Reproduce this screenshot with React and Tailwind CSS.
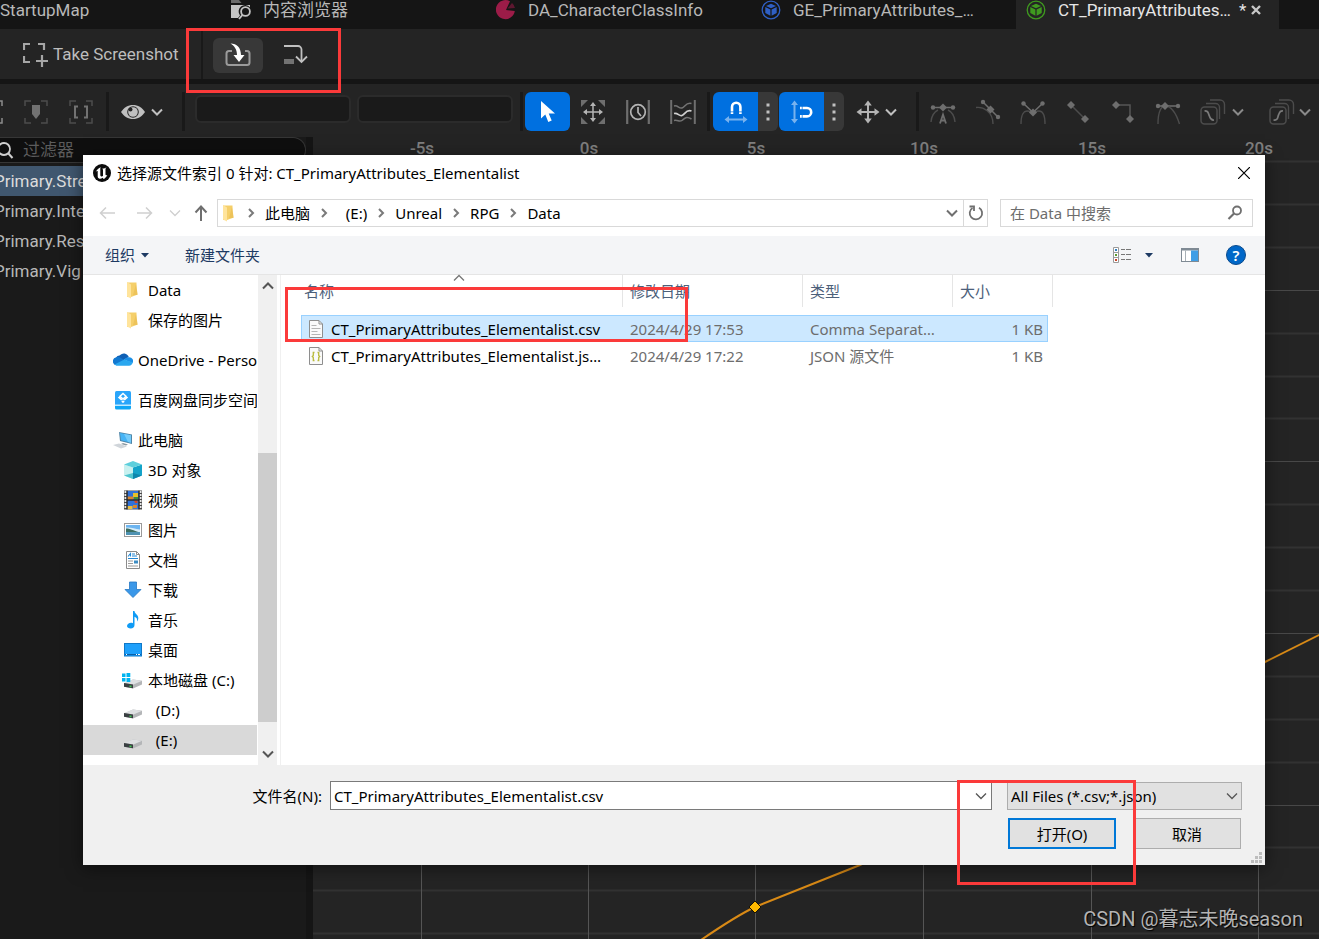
import React, { useState } from 'react';
import clsx from 'clsx';

const TABS = [
  { id: 'browser', label: '内容浏览器', icon: BrowserIcon },
  { id: 'da', label: 'DA_CharacterClassInfo', icon: PieIcon },
  { id: 'ge', label: 'GE_PrimaryAttributes_…', icon: CubeIcon, color: 'text-[#2f5fc4]' },
  { id: 'ct', label: 'CT_PrimaryAttributes…', icon: CubeIcon, color: 'text-[#3f9a1f]', active: true },
];

const CURVES = ['Primary.Stre', 'Primary.Inte', 'Primary.Res', 'Primary.Vig'];

const CRUMBS = ['此电脑', '\u00a0\u00a0(E:)', 'Unreal', 'RPG', 'Data'];

const PLACES = [
  { label: 'Data', icon: FolderIcon, child: true },
  { label: '保存的图片', icon: FolderIcon, child: true },
  { label: 'OneDrive - Personal', icon: CloudIcon, spaced: true },
  { label: '百度网盘同步空间', icon: NetdiskIcon, spaced: true },
  { label: '此电脑', icon: PcIcon, spaced: true },
  { label: '3D 对象', icon: Box3dIcon, child: true },
  { label: '视频', icon: VideoIcon, child: true },
  { label: '图片', icon: PictureIcon, child: true },
  { label: '文档', icon: DocIcon, child: true },
  { label: '下载', icon: DownloadIcon, child: true },
  { label: '音乐', icon: MusicIcon, child: true },
  { label: '桌面', icon: DesktopIcon, child: true },
  { label: '本地磁盘 (C:)', icon: SystemDriveIcon, child: true },
  { label: '\u00a0\u00a0(D:)', icon: DriveIcon, child: true },
  { label: '\u00a0\u00a0(E:)', icon: DriveIcon, child: true, selected: true },
];

const FILES = [
  { name: 'CT_PrimaryAttributes_Elementalist.csv', date: '2024/4/29 17:53', type: 'Comma Separat…', size: '1 KB', icon: TextFileIcon },
  { name: 'CT_PrimaryAttributes_Elementalist.js…', date: '2024/4/29 17:22', type: 'JSON 源文件', size: '1 KB', icon: JsonFileIcon },
];

/* ---------- editor icons ---------- */

function Svg({ w = 24, h = 24, className, children }) {
  return (
    <svg width={w} height={h} viewBox={`0 0 ${w} ${h}`} fill="none" className={clsx('shrink-0', className)} aria-hidden="true">
      {children}
    </svg>
  );
}

function BrowserIcon() {
  return (
    <Svg w={20} h={20}>
      <path d="M0 0h8l2.500 3H0z" fill="#6b6b6b" />
      <path d="M0 5h19v2.200a6.500 6.500 0 0 0-10 8.300L7 18H0z" fill="#c4c4c4" />
      <circle cx="14.500" cy="11.500" r="4.400" stroke="#c4c4c4" strokeWidth="1.800" />
      <path d="M11.500 14.800 8 19" stroke="#c4c4c4" strokeWidth="1.800" />
    </Svg>
  );
}

function PieIcon() {
  return (
    <Svg w={20} h={20}>
      <path d="M10 10 14 1.300A9.500 9.500 0 1 0 18.800 11z" fill="#9c1c48" />
      <path d="M11.500 8.500 16 3a9 9 0 0 1 3 5z" fill="#5e1730" />
    </Svg>
  );
}

function CubeIcon() {
  return (
    <Svg w={20} h={20}>
      <circle cx="10" cy="10" r="8.800" stroke="currentColor" strokeWidth="1.300" />
      <path d="M10 3.700 15 6l-5 2.300L5 6z" fill="currentColor" />
      <path d="M4.300 7 9.400 9.400v6.400l-5.100-2.700zM15.700 7l-5.100 2.400v6.400l5.100-2.700z" fill="currentColor" />
    </Svg>
  );
}

function ScreenshotIcon() {
  return (
    <Svg w={26} h={26}>
      <path d="M1 8V2h6M15 2h6v6M1 14v6h6" stroke="#a6a6a6" strokeWidth="2.200" />
      <path d="M19 13v12M13 19h12" stroke="#a6a6a6" strokeWidth="2.200" />
    </Svg>
  );
}

function ReimportIcon() {
  return (
    <Svg w={26} h={24}>
      <path d="M7 8H4a2.500 2.500 0 0 0-2.500 2.500v9A2.500 2.500 0 0 0 4 22h18a2.500 2.500 0 0 0 2.500-2.500v-9A2.500 2.500 0 0 0 22 8h-2" stroke="#9b9b9b" strokeWidth="2" />
      <path d="M5.500.500C12 .500 15.800 4.500 16 12h3.500L14 19 8.500 12H12C12 6.500 9.500 3 5.500.500z" fill="#fff" />
    </Svg>
  );
}

function AppendIcon() {
  return (
    <Svg w={24} h={22}>
      <path d="M0 2h14a3.500 3.500 0 0 1 3.500 3.500V17" stroke="#c0c0c0" strokeWidth="1.800" />
      <path d="M12 12.500l5.500 5.500 5.500-5.500" stroke="#c0c0c0" strokeWidth="1.800" />
      <rect y="15" width="10" height="5" fill="#737373" />
    </Svg>
  );
}

function Corners({ color = '#4c4c4c' }) {
  return <path d="M1 6V1h6M17 1h6v5M1 18v5h6M17 23h6v-5" stroke={color} strokeWidth="1.500" />;
}

function FrameIcon({ kind }) {
  return (
    <Svg>
      <Corners color={kind === 'all' ? '#8c8c8c' : '#4c4c4c'} />
      {kind === 'marker' && <path d="M8 5h8v9l-4 5-4-5z" fill="#727272" />}
      {kind === 'range' && <path d="M9 6.500H6v11h3M15 6.500h3v11h-3" stroke="#727272" strokeWidth="2" />}
    </Svg>
  );
}

function EyeIcon() {
  return (
    <Svg w={24} h={16}>
      <path d="M0 8C3 3.500 7 1 12 1s9 2.500 12 7c-3 4.500-7 7-12 7S3 12.500 0 8z" fill="#c0c0c0" />
      <circle cx="12" cy="8" r="5.800" fill="#242424" />
      <circle cx="12" cy="8" r="4.800" fill="#c0c0c0" />
      <circle cx="9.500" cy="5.500" r="2" fill="#242424" />
    </Svg>
  );
}

function Chevron({ className = 'text-[#c0c0c0]' }) {
  return (
    <Svg w={12} h={8} className={className}>
      <path d="M1 1.500l5 5 5-5" stroke="currentColor" strokeWidth="2" />
    </Svg>
  );
}

function CursorIcon() {
  return (
    <Svg w={16} h={22}>
      <path d="M1 0v17.500l4.300-4 3 7.500 3.400-1.400-3-7.200H15z" fill="#fff" />
    </Svg>
  );
}

function MoveGlyph() {
  return (
    <g fill="currentColor" stroke="currentColor">
      <path d="M12 4v16M4 12h16" strokeWidth="2" />
      <path d="M12 .500l3.800 5H8.200zM12 23.500l3.800-5H8.200zM.500 12l5-3.800v7.600zM23.500 12l-5-3.800v7.600z" stroke="none" />
    </g>
  );
}

function TransformIcon() {
  return (
    <Svg className="text-[#b4b4b4]">
      <path d="M0 0h7L0 7zM24 0h-7l7 7zM0 24h7l-7-7zM24 24h-7l7-7z" fill="#6e6e6e" />
      <path d="M12 5v14M5 12h14" stroke="currentColor" strokeWidth="1.500" />
      <path d="M12 2l3 4H9zM12 22l3-4H9zM2 12l4-3v6zM22 12l-4-3v6z" fill="currentColor" />
    </Svg>
  );
}

function RetimeIcon() {
  return (
    <Svg>
      <path d="M1.200 0v24M22.800 0v24" stroke="#6e6e6e" strokeWidth="2.200" />
      <circle cx="12" cy="12" r="7.300" stroke="#b4b4b4" strokeWidth="1.700" />
      <path d="M12 7v5.500l3 3.500" stroke="#b4b4b4" strokeWidth="1.700" />
    </Svg>
  );
}

function WavesIcon() {
  return (
    <Svg w={26}>
      <path d="M1.200 0v24M24.800 0v24" stroke="#6e6e6e" strokeWidth="2" />
      <path d="M4 6c4-1 5 3 8 2s4-6 9.500-4.500M4 20.500c4-1 5 2 8 0s4-5 9.500-1.500" stroke="#747474" strokeWidth="1.500" />
      <path d="M4 13.500c4-1 5 3 8 2s4-6.500 9.500-4.500" stroke="#d0d0d0" strokeWidth="1.700" />
    </Svg>
  );
}

function MagnetIcon({ sideways }) {
  return (
    <Svg w={24} h={24}>
      <g transform={sideways ? 'rotate(90 12 12)' : undefined}>
        <path d="M8 11.500V7a4.200 4.200 0 0 1 8.400 0v4.500" stroke="#fff" strokeWidth="2.600" />
        <path d="M6.700 12.200h2.600v1.800H6.700zM15.100 12.200h2.600v1.800h-2.600z" fill="#fff" />
        <path d="M4 19.500h16" stroke="#78b2ee" strokeWidth="2" />
        <path d="M.500 19.500 5 16v7zM23.500 19.500 19 16v7z" fill="#78b2ee" />
      </g>
    </Svg>
  );
}

function Dots() {
  return (
    <Svg w={4} h={18}>
      <path d="M.500.500h3v3h-3zM.500 7.500h3v3h-3zM.500 14.500h3v3h-3z" fill="#c0c0c0" />
    </Svg>
  );
}

function Key({ x, y }) {
  return <path d={`M${x} ${y - 4}l4 4-4 4-4-4z`} fill="#6e6e6e" />;
}

function TangentIcon({ kind }) {
  return (
    <Svg w={26} h={26}>
      {kind === 'auto' && (
        <>
          <path d="M3 8.500h20" stroke="#6e6e6e" strokeWidth="1.500" />
          <circle cx="3" cy="8.500" r="2.200" fill="#6e6e6e" />
          <circle cx="23" cy="8.500" r="2.200" fill="#6e6e6e" />
          <path d="M1 23c.500-6 3-10 7-12M25 23c-.500-6-3-10-7-12" stroke="#4c4c4c" strokeWidth="1.400" />
          <Key x={13} y={8.5} />
          <path d="M10 24.500 13 15.500l3 9M11 21.500h4" stroke="#6e6e6e" strokeWidth="1.800" />
        </>
      )}
      {kind === 'user' && (
        <>
          <path d="M8 3l15 15" stroke="#6e6e6e" strokeWidth="1.500" />
          <circle cx="8" cy="3" r="2.200" fill="#6e6e6e" />
          <circle cx="23" cy="18" r="2.200" fill="#6e6e6e" />
          <path d="M1 8.500c7-1 17 4 17 16.500" stroke="#4c4c4c" strokeWidth="1.400" />
          <Key x={15.5} y={10.5} />
        </>
      )}
      {kind === 'break' && (
        <>
          <path d="M3.500 4.500l9.500 9 9.500-9" stroke="#6e6e6e" strokeWidth="1.500" />
          <circle cx="3.500" cy="4.500" r="2.200" fill="#6e6e6e" />
          <circle cx="22.500" cy="4.500" r="2.200" fill="#6e6e6e" />
          <path d="M1 25c0-10 3-13 6-13s4 2 6 2 3-2 6-2 6 3 6 13" stroke="#4c4c4c" strokeWidth="1.400" />
          <Key x={13} y={13.5} />
        </>
      )}
      {kind === 'linear' && (
        <>
          <path d="M6 6l14 14" stroke="#4c4c4c" strokeWidth="1.500" />
          <Key x={6} y={6} />
          <Key x={20} y={20} />
        </>
      )}
      {kind === 'constant' && (
        <>
          <path d="M6 6h14v14" stroke="#555" strokeWidth="1.500" />
          <Key x={6} y={6} />
          <Key x={20} y={20} />
        </>
      )}
      {kind === 'weighted' && (
        <>
          <path d="M3 7h20" stroke="#6e6e6e" strokeWidth="1.500" />
          <circle cx="3" cy="7" r="2.200" fill="#6e6e6e" />
          <circle cx="23" cy="7" r="2.200" fill="#6e6e6e" />
          <path d="M3 25C3 11 7 7 10 7c6 0 11 7 14.500 18" stroke="#4c4c4c" strokeWidth="1.400" />
          <Key x={10} y={7} />
        </>
      )}
    </Svg>
  );
}

function InfinityIcon({ mirrored }) {
  return (
    <Svg w={26} h={26}>
      <path d="M6 4.500h9.500a4 4 0 0 1 4 4V20M10 1h10a4.500 4.500 0 0 1 4.500 4.500V15" stroke="#4c4c4c" strokeWidth="1.400" />
      <rect x="1" y="8" width="16" height="17" rx="3.500" stroke="#4c4c4c" strokeWidth="1.500" />
      <path
        d={mirrored ? 'M4.500 21c5 .500 4-3 5-5s1-4.500 4.500-4' : 'M4.500 12c4-.500 3.500 2 4.500 4s1 5.500 5 5'}
        stroke="#7a7a7a"
        strokeWidth="1.700"
      />
    </Svg>
  );
}

/* ---------- dialog icons ---------- */

function UnrealIcon() {
  return (
    <Svg w={18} h={18}>
      <circle cx="9" cy="9" r="9" fill="#0b0b0b" />
      <path
        d="M2.500 8.500C3.500 6 5.500 4 8 3.300c-.700.600-.700 1.200-.700 2v5.800c0 1 .700 1.500 1.500 1.300.500-.100.900-.400 1.200-.700V6c0-.700-.300-1-.900-1.200 1.800-.200 3.500-.900 4.600-1.800-.900.900-1.200 1.500-1.200 2.500v5c0 .800.600 1 1.800.400-1 2.300-2.300 3.300-3.600 4l-1.200-1.200C8.500 14.700 7.500 15 6.500 14.700c-1.400-.400-1.800-1.300-1.800-2.400V7.500c0-.700-1-.700-2.200 1z"
        fill="#fff"
      />
    </Svg>
  );
}

function ArrowIcon({ dir, className }) {
  return (
    <Svg w={16} h={16} className={className}>
      {dir === 'left' && <path d="M16 8H1.500M7 2.500 1.500 8 7 13.500" stroke="currentColor" strokeWidth="1.500" />}
      {dir === 'right' && <path d="M0 8h14.500M9 2.500 14.500 8 9 13.500" stroke="currentColor" strokeWidth="1.500" />}
      {dir === 'up' && <path d="M8 16V1.500M2.500 7.500 8 1.500l5.500 6" stroke="currentColor" strokeWidth="2" />}
    </Svg>
  );
}

function ThinChevron({ dir = 'down', bold, className }) {
  const paths = { down: 'M1 2.500l5 5 5-5', up: 'M1 7.500l5-5 5 5', right: 'M4 1l4 4-4 4' };
  return (
    <Svg w={12} h={10} className={className}>
      <path d={paths[dir]} stroke="currentColor" strokeWidth={bold ? 2 : 1.3} />
    </Svg>
  );
}

function FolderIcon() {
  return (
    <Svg w={18} h={18}>
      <path d="M3 1.500h9.500V14L7 16H3z" fill="#f5cf6a" />
      <path d="M12 3l1.500 9.500V14H9z" fill="#edc35a" />
      <path d="M3 1l4 2.500V17.500L3 15.500z" fill="#ffe49c" />
    </Svg>
  );
}

function CloudIcon() {
  return (
    <Svg w={20} h={18}>
      <path d="M6.500 4.500A5.500 5.500 0 0 1 15.800 6L9 10 3 6.500A5 5 0 0 1 6.500 4.500z" fill="#0f5fb4" />
      <path d="M3.200 6.200A4 4 0 0 1 7 6.500l7 4-10.500 3.800A4.100 4.100 0 0 1 3.200 6.200z" fill="#1278d0" />
      <path d="M15.800 6.200A3.800 3.800 0 0 1 19.500 12L11 8.800C12 7 14 6 15.800 6.200z" fill="#1b8fe6" />
      <path d="M1.500 13.500 11.300 8.500 19.800 11.500c-.500 2-1.800 3.200-3.800 3.200H5c-1.400 0-2.600-.300-3.500-1.200z" fill="#2aa7ef" />
    </Svg>
  );
}

function NetdiskIcon() {
  return (
    <Svg w={20} h={20}>
      <path d="M2 2.500A1.500 1.500 0 0 1 3.500 1H16.500A1.500 1.500 0 0 1 18 2.500V15H2z" fill="#2aa5fa" />
      <path d="M2 15.500H18v2.500a1.500 1.500 0 0 1-1.500 1.500h-13A1.500 1.500 0 0 1 2 18z" fill="#10a6f5" />
      <path d="M2 14.500H18V16H2z" fill="#bfe9ff" />
      <path d="M10 3.500l3 2.800L10 9 7 6.300z" stroke="#fff" strokeWidth="1.500" />
      <path d="M4.800 7.500l1.700-1.300 3.200 3-1.500 1.300zM15.200 7.500l-1.700-1.300-3.200 3 1.500 1.300zM10 10.300l1.800 1.400L10 13.100l-1.800-1.400z" fill="#fff" />
    </Svg>
  );
}

function PcIcon() {
  return (
    <Svg w={20} h={18}>
      <path d="M6 1l13 2.500v9.500L7 10z" fill="#4f86a8" />
      <path d="M7 2l11 2.300v7.400L8 9.200z" fill="#45b3f5" />
      <path d="M11 2.900l7 1.400v7.400l-3-.700z" fill="#74cbfa" />
      <path d="M10 12l5 1.500-2 1-5-1.500z" fill="#8c9aa3" />
      <path d="M0 14l6-1.500 8 3L8 17.500z" fill="#d0d5da" />
    </Svg>
  );
}

function Box3dIcon() {
  return (
    <Svg w={18} h={18}>
      <path d="M0 3.500 9 6.500V18L0 14.500z" fill="#c8f1f0" />
      <path d="M18 3.500 9 6.500V18l9-3.500z" fill="#13a3c9" />
      <path d="M9 0l9 3.500L9 6.500 0 3.500z" fill="#5dcfdc" />
      <path d="M0 14.500 9 12v6z" fill="#4fc6cf" />
      <path d="M9 12l9 2.500L9 18z" fill="#0b87ad" />
    </Svg>
  );
}

function VideoIcon() {
  return (
    <Svg w={18} h={20}>
      <path d="M0 .500h18v19H0z" fill="#4a4a4a" />
      <path d="M1.500 1v18M16.500 1v18" stroke="#e8e8e8" strokeWidth="2" strokeDasharray="2 1" />
      <path d="M3.500 1h11v8.500h-11zM3.500 10.500h11V19h-11z" fill="#3172d8" />
      <path d="M3.500 6.500h6v3h-6zM9 15h4v3H9z" fill="#d8852c" />
      <path d="M9 3h5v4H9z" fill="#e8c12a" />
      <path d="M10 7h4v2.500h-4z" fill="#3b8c3b" />
      <path d="M10 10.500h3.500V13H11z" fill="#d14624" />
      <path d="M3.500 16h5v3h-5z" fill="#eabf3e" />
      <path d="M3 .500v19M15 .500v19M3 10h12" stroke="#1d1d1d" strokeWidth="1" />
    </Svg>
  );
}

function PictureIcon() {
  return (
    <Svg w={18} h={14}>
      <rect x=".500" y=".500" width="17" height="13" fill="#fff" stroke="#9a9a9a" />
      <path d="M2 2h14v10H2z" fill="#6db5f0" />
      <path d="M2 4.500c5-.500 9 1.500 14 2V9H2z" fill="#d5ecfa" />
      <path d="M2 5.500c4 0 7 2 14 4H2z" fill="#3c6e62" />
      <path d="M2 9.200h14V12H2z" fill="#4e92b3" />
    </Svg>
  );
}

function DocIcon() {
  return (
    <Svg w={18} h={18}>
      <path d="M2.500.500h10l3 3v14h-13z" fill="#fff" stroke="#8b8b8b" />
      <path d="M12.500.500v3h3" stroke="#8b8b8b" />
      <path d="M4 5.500 6.500 2.500v3M8 3h3M8 5h5M4 7.500h10" stroke="#2186d4" strokeWidth="1.100" />
      <path d="M4 10h5M4 12.500h5M4 15h10" stroke="#9a9a9a" />
      <path d="M10 9.500h4v3h-4z" fill="#3b8dc4" />
    </Svg>
  );
}

function DownloadIcon() {
  return (
    <Svg w={18} h={18}>
      <path d="M5.500 1h7v7.500H17L9 16.500 1 8.500h4.500z" fill="#3a97e8" stroke="#2477c4" strokeWidth=".800" />
    </Svg>
  );
}

function MusicIcon() {
  return (
    <Svg w={18} h={18}>
      <path d="M9 0h1.500c0 3 3.800 3.500 3.800 7 0 1.500-.500 2.500-1.300 3.500.500-2.800-.500-4-2.500-4.700V14c0 2-1.500 3.500-3.800 3.500C4.700 17.500 3 16.600 3 15c0-1.800 2-3.200 4-3.200.800 0 1.500.100 2 .400z" fill="#0f9bf5" />
    </Svg>
  );
}

function DesktopIcon() {
  return (
    <Svg w={18} h={14}>
      <rect x=".500" y=".500" width="17" height="12.500" fill="#1ea0fb" stroke="#0f78c8" />
      <path d="M1 11.500h16" stroke="#0a5fa6" />
      <path d="M2 11.500h1M12 11.500h1M14 11.500h2" stroke="#fff" />
    </Svg>
  );
}

function DriveShape() {
  return (
    <>
      <path d="M0 12.500l9-4 9 1.200v3.800l-9 4-9-1.700z" fill="#b4b6b8" />
      <path d="M0 12l9-3.500 9 1.200-8.500 3.800z" fill="#dfe1e3" />
      <path d="M0 12l9 1.500v3.800l-9-1.500z" fill="#3a3f42" />
      <path d="M5.500 14.500l2 .300v1.400l-2-.300z" fill="#3fd052" />
    </>
  );
}

function DriveIcon() {
  return (
    <Svg w={18} h={18}>
      <DriveShape />
    </Svg>
  );
}

function SystemDriveIcon() {
  return (
    <Svg w={20} h={18} className="-ml-0.5">
      <g transform="translate(2 0)">
        <DriveShape />
      </g>
      <path d="M0 2.500h3.500V6H0zM4.500 2h3.800v4H4.500zM0 7h3.500v3.500H0zM4.500 7h3.800v4H4.500z" fill="#00b4f0" />
    </Svg>
  );
}

function TextFileIcon() {
  return (
    <Svg w={16} h={18}>
      <path d="M1.500.500h9.500l3.500 3.500v13.500h-13z" fill="#fafafa" stroke="#8e8e8e" />
      <path d="M11 .500V4h3.500" stroke="#8e8e8e" />
      <path d="M3.500 5.500h5M3.500 8.500h9M3.500 11.500h6M3.500 14.500h9" stroke="#b5b5b5" />
    </Svg>
  );
}

function JsonFileIcon() {
  return (
    <Svg w={16} h={18}>
      <path d="M1.500.500h9.500l3.500 3.500v13.500h-13z" fill="#fafafa" stroke="#8e8e8e" />
      <path d="M11 .500V4h3.500" stroke="#8e8e8e" />
      <path d="M6.500 5.500H5.300v3L4.300 9.500l1 1v3h1.200M9.500 5.500h1.200v3l1 1-1 1v3H9.500" stroke="#b9ba3c" strokeWidth="1.300" />
    </Svg>
  );
}

function ViewIcon() {
  return (
    <Svg w={18} h={16}>
      <path d="M.500.500h5v15h-5zM.500 5.500h5M.500 10.500h5" stroke="#9a9a9a" fill="#fff" />
      <path d="M2 2h2v2H2z" fill="#2f7fc0" />
      <path d="M2 7h2v2H2z" fill="#5c9a2e" />
      <path d="M2 12h2v2H2z" fill="#c8452a" />
      <path d="M8 2.500h4M13 2.500h5M8 7.500h4M13 7.500h5M8 12.500h4M13 12.500h5" stroke="#777" />
    </Svg>
  );
}

function PreviewPaneIcon() {
  return (
    <Svg w={18} h={14}>
      <rect x=".500" y=".500" width="17" height="13" fill="#fff" stroke="#7f8a94" />
      <path d="M1 1h16v1.500H1z" fill="#7f8a94" />
      <path d="M4.500 2.500V13" stroke="#a8b0b6" />
      <path d="M10 2.500h7V13h-7z" fill="#3f9ee6" />
    </Svg>
  );
}

/* ---------- editor ---------- */

function Separator() {
  return <span className="w-[3px] self-stretch bg-[#191919]" />;
}

function TabBar() {
  return (
    <nav className="flex h-[29px] gap-0.5 overflow-hidden text-[17px] leading-5 text-[#b8b8b8]">
      <button className="h-5 w-[219px] shrink-0 text-left">StartupMap</button>
      {TABS.map(({ id, label, icon: Icon, color, active }) => (
        <div key={id} className={clsx('flex w-[263px] shrink-0 pl-2.5', active && 'bg-[#242424] text-[#e6e6e6]')}>
          <button className="flex h-5 items-center gap-3 whitespace-nowrap">
            <span className={color}>
              <Icon />
            </span>
            {label}
          </button>
          {active && (
            <span className="flex h-5 items-center gap-1 pl-2">
              *
              <button aria-label="关闭标签">
                <Svg w={12} h={12}>
                  <path d="M2 2l8 8M10 2l-8 8" stroke="#c8c8c8" strokeWidth="2.400" />
                </Svg>
              </button>
            </span>
          )}
        </div>
      ))}
    </nav>
  );
}

function AssetToolbar() {
  return (
    <div className="flex h-[50px] items-center bg-[#242424] pt-0.5">
      <button className="ml-[23px] flex items-center gap-1 text-[17px] text-[#bdbdbd]">
        <ScreenshotIcon />
        Take Screenshot
      </button>
      <span className="ml-[22px] w-0.5 self-stretch bg-[#191919]" />
      <button aria-label="重新导入" className="ml-2.5 flex h-[35px] w-[50px] items-center justify-center rounded-md bg-[#383838]">
        <ReimportIcon />
      </button>
      <button aria-label="追加" className="ml-[21px]">
        <AppendIcon />
      </button>
    </div>
  );
}

function SnapButton({ label, sideways }) {
  return (
    <div className="flex h-[39px] overflow-hidden rounded-md">
      <button aria-label={label} className="flex w-[45px] items-center justify-center bg-[#0070e0]">
        <MagnetIcon sideways={sideways} />
      </button>
      <button aria-label={`${label}选项`} className="flex w-5 items-center justify-center bg-[#383838]">
        <Dots />
      </button>
    </div>
  );
}

function ToolButton({ label, children }) {
  return (
    <button aria-label={label} className="flex w-[45px] shrink-0 items-center justify-center">
      {children}
    </button>
  );
}

function CurveToolbar() {
  return (
    <div className="mt-[5px] flex h-[53px] items-center overflow-hidden bg-[#242424] pt-0.5">
      <div className="-ml-8 flex h-[39px] shrink-0 items-center">
        <ToolButton label="框选全部"><FrameIcon kind="all" /></ToolButton>
        <ToolButton label="框选标记"><FrameIcon kind="marker" /></ToolButton>
        <ToolButton label="框选范围"><FrameIcon kind="range" /></ToolButton>
        <span className="w-[3px]" />
        <Separator />
        <button aria-label="视图选项" className="flex w-[73px] items-center gap-1.5 pl-3">
          <EyeIcon />
          <Chevron />
        </button>
        <Separator />
      </div>
      <div className="mb-1.5 ml-2.5 flex gap-1.5">
        <input aria-label="时间" className="h-7 w-[156px] rounded-md border-2 border-[#2b2b2b] bg-[#1a1a1a] px-2 text-[#c0c0c0]" />
        <input aria-label="数值" className="h-7 w-[156px] rounded-md border-2 border-[#2b2b2b] bg-[#1a1a1a] px-2 text-[#c0c0c0]" />
      </div>
      <div className="ml-[7px] flex h-[39px] shrink-0 items-center">
        <Separator />
        <button aria-label="选择工具" className="ml-0.5 flex h-[39px] w-[45px] items-center justify-center rounded-md bg-[#0070e0]">
          <CursorIcon />
        </button>
        <ToolButton label="变换工具"><TransformIcon /></ToolButton>
        <ToolButton label="重新定时"><RetimeIcon /></ToolButton>
        <ToolButton label="多重选择"><WavesIcon /></ToolButton>
        <span className="ml-0.5 flex self-stretch pr-[3px]"><Separator /></span>
        <SnapButton label="时间吸附" />
        <span className="w-px" />
        <SnapButton label="数值吸附" sideways />
        <button aria-label="轴吸附" className="flex w-[72px] items-center gap-[5px] pl-3 text-[#b4b4b4]">
          <Svg><MoveGlyph /></Svg>
          <Chevron />
        </button>
        <Separator />
        <span className="w-px" />
        {['auto', 'user', 'break', 'linear', 'constant', 'weighted'].map((kind) => (
          <ToolButton key={kind} label={kind}><TangentIcon kind={kind} /></ToolButton>
        ))}
        <button aria-label="前无穷" className="ml-2.5 flex w-[69px] items-center gap-1.5">
          <InfinityIcon />
          <Chevron className="text-[#8a8a8a]" />
        </button>
        <button aria-label="后无穷" className="flex items-center gap-1">
          <InfinityIcon mirrored />
          <Chevron className="text-[#8a8a8a]" />
        </button>
      </div>
    </div>
  );
}

function CurveList() {
  return (
    <aside className="w-[306px] shrink-0 bg-[#1a1a1a]">
      <label className="flex h-[26px] items-center rounded-r-full border border-l-0 border-[#363636] bg-[#0f0f0f]">
        <Svg w={14} h={18}>
          <circle cx="4" cy="8" r="6" stroke="#d0d0d0" strokeWidth="1.800" />
          <path d="M8 12l4.500 5" stroke="#d0d0d0" strokeWidth="2" />
        </Svg>
        <input aria-label="过滤器" placeholder="过滤器" className="ml-[9px] w-full bg-transparent text-[17px] leading-6 outline-none placeholder:text-[#5c5c5c]" />
      </label>
      <ul className="mt-[3px] text-[17px] leading-[30px] text-[#b8b8b8]">
        {CURVES.map((name, i) => (
          <li key={name} className={clsx(i === 0 && 'bg-[#40576f] text-[#dcdcdc]')}>
            <span className="-ml-1.5">{name}</span>
          </li>
        ))}
      </ul>
    </aside>
  );
}

function CurveGraph() {
  const xs = [108, 275, 442, 610, 778, 945];
  const labels = ['-5s', '0s', '5s', '10s', '15s', '20s'];
  const ys = Array.from({ length: 19 }, (_, i) => Math.round(24 + i * 42.9));
  return (
    <svg className="min-w-0 flex-1 bg-[#242424]" aria-label="曲线">
      {ys.map((y, i) => (
        <path key={y} d={`M0 ${y + 0.5}h3000`} stroke={i % 4 === 3 ? '#484848' : '#323232'} strokeWidth={i % 4 === 3 ? 1 : 2} />
      ))}
      {xs.map((x) => (
        <path key={x} d={`M${x + 0.5} 24v3000`} stroke="#555" />
      ))}
      {xs.map((x, i) => (
        <text key={x} x={x + 1} y="17" textAnchor="middle" fontSize="17" fontWeight="500" fill="#808080">
          {labels[i]}
        </text>
      ))}
      <path d="M388 803C410 788 425 778 442 770L547 728 952 525 1010 496" stroke="#d98a16" strokeWidth="2" fill="none" />
      <path d="M442 764l6 6-6 6-6-6z" fill="#ffb900" stroke="#1a1400" />
    </svg>
  );
}

/* ---------- file dialog ---------- */

function AddressBar() {
  return (
    <div className="flex items-center px-3 pb-[9px]">
      <div className="flex w-[122px] shrink-0 items-center text-[#cfcfcf]">
        <button aria-label="后退" className="ml-1"><ArrowIcon dir="left" /></button>
        <button aria-label="前进" className="ml-[22px]"><ArrowIcon dir="right" /></button>
        <button aria-label="最近位置" className="ml-4"><ThinChevron /></button>
        <button aria-label="上一级" className="ml-3 text-[#6f6f6f]"><ArrowIcon dir="up" /></button>
      </div>
      <div className="flex h-7 min-w-0 flex-1 items-center border border-[#d9d9d9]">
        <span className="ml-0.5 w-[25px]"><FolderIcon /></span>
        {CRUMBS.map((crumb) => (
          <React.Fragment key={crumb}>
            <ThinChevron dir="right" bold className="mr-2 text-[#7a7a7a]" />
            <button className="mr-2">{crumb}</button>
          </React.Fragment>
        ))}
        <button aria-label="历史记录" className="mr-[5px] ml-auto text-[#6f6f6f]">
          <ThinChevron bold />
        </button>
        <button aria-label="刷新" className="flex w-6 items-center justify-center self-stretch border-l border-[#d9d9d9]">
          <Svg w={16} h={16}>
            <path d="M11 2.800A6.200 6.200 0 1 1 4.500 3" stroke="#6f6f6f" strokeWidth="1.800" />
            <path d="M1.500 1.500H6V6" stroke="#6f6f6f" strokeWidth="1.800" />
          </Svg>
        </button>
      </div>
      <label className="ml-3 flex h-7 w-[253px] items-center border border-[#d9d9d9] px-[9px]">
        <input aria-label="搜索" placeholder="在 Data 中搜索" className="w-full outline-none placeholder:text-[#6d6d6d]" />
        <Svg w={16} h={16}>
          <circle cx="10" cy="5.500" r="4" stroke="#6f6f6f" strokeWidth="1.800" />
          <path d="M7 8.500 1.500 14" stroke="#6f6f6f" strokeWidth="2.200" />
        </Svg>
      </label>
    </div>
  );
}

function CommandBar() {
  return (
    <div className="flex h-[39px] items-center border-b border-[#e5e5e5] bg-[#f4f5f7] text-[#1d3a63]">
      <button className="ml-[22px] flex items-center gap-1.5">
        组织
        <Svg w={8} h={5}><path d="M0 0h8L4 4.500z" fill="#1d3a63" /></Svg>
      </button>
      <button className="ml-9">新建文件夹</button>
      <button aria-label="视图" className="ml-auto"><ViewIcon /></button>
      <button aria-label="更多视图" className="ml-3.5">
        <Svg w={8} h={5}><path d="M0 0h8L4 4.500z" fill="#1d3a63" /></Svg>
      </button>
      <button aria-label="预览窗格" className="ml-7"><PreviewPaneIcon /></button>
      <button aria-label="帮助" className="mr-[19px] ml-[27px] flex h-5 w-5 items-center justify-center rounded-full border border-[#0a4a8c] bg-[#0067c8] leading-4 font-semibold text-white">
        ?
      </button>
    </div>
  );
}

function Places() {
  return (
    <>
      <ul className="w-[174px] shrink-0 overflow-hidden pb-2.5 whitespace-nowrap">
        {PLACES.map(({ label, icon: Icon, child, spaced, selected }) => (
          <li key={label} className={clsx(spaced && 'mt-2.5')}>
            <button className={clsx('flex h-[30px] w-full items-center', child ? 'gap-1.5 pl-[41px]' : 'gap-[5px] pl-[30px]', selected && 'bg-[#d9d9d9]')}>
              <span className={clsx('flex shrink-0 justify-center', child ? 'w-[18px]' : 'w-5')}>
                <Icon />
              </span>
              {label}
            </button>
          </li>
        ))}
      </ul>
      <div className="ml-px flex w-[19px] shrink-0 flex-col items-center bg-[#f0f0f0] py-1.5 text-[#555]">
        <ThinChevron dir="up" bold />
        <div className="mt-[162px] h-[269px] w-full bg-[#cdcdcd]" />
        <ThinChevron bold className="mt-auto" />
      </div>
    </>
  );
}

function FileTable() {
  const [selected, setSelected] = useState(0);
  const cell = 'border-y';
  return (
    <div className="ml-[3px] min-w-0 flex-1 border-l border-[#f0f0f0] pl-5">
      <table className="table-fixed border-separate border-spacing-0 text-left">
        <colgroup>
          <col className="w-[322px]" />
          <col className="w-[180px]" />
          <col className="w-[150px]" />
          <col className="w-[95px]" />
          <col className="w-[5px]" />
        </colgroup>
        <thead className="text-[#4c607a]">
          <tr>
            <th className="p-0 pb-2 font-normal">
              <div className="relative h-8 border-r border-[#e5e5e5] pl-[3px] leading-8">
                名称
                <ThinChevron dir="up" className="absolute top-[-2px] left-[152px] text-[#777]" />
              </div>
            </th>
            <th className="p-0 pb-2 font-normal"><div className="h-8 border-r border-[#e5e5e5] pl-[7px] leading-8">修改日期</div></th>
            <th className="p-0 pb-2 font-normal"><div className="h-8 border-r border-[#e5e5e5] pl-[7px] leading-8">类型</div></th>
            <th colSpan={2} className="p-0 pb-2 font-normal"><div className="h-8 border-r border-[#e5e5e5] pl-[7px] leading-8">大小</div></th>
          </tr>
        </thead>
        <tbody className="text-[#6d6d6d]">
          {FILES.map(({ name, date, type, size, icon: Icon }, i) => {
            const tone = i === selected ? 'bg-[#cce8ff] border-[#99d1ff]' : 'border-transparent';
            return (
              <tr key={name} onClick={() => setSelected(i)} className="h-[27px] whitespace-nowrap">
                <td className={clsx('border-l p-0 pl-1.5 text-black', cell, tone)}>
                  <span className="flex items-center gap-[7px]">
                    <Icon />
                    {name}
                  </span>
                </td>
                <td className={clsx('p-0 pl-[7px]', cell, tone)}>{date}</td>
                <td className={clsx('p-0 pl-[7px]', cell, tone)}>{type}</td>
                <td className={clsx('border-r p-0 pr-1 text-right', cell, tone)}>{size}</td>
                <td className="p-0" />
              </tr>
            );
          })}
        </tbody>
      </table>
    </div>
  );
}

function DialogFooter() {
  return (
    <div className="relative bg-[#f0f0f0] py-4">
      <div className="flex items-center pr-[23px]">
        <label htmlFor="file-name" className="w-[247px] shrink-0 pr-2 text-right">文件名(N):</label>
        <div className="flex h-[29px] min-w-0 flex-1 items-center border border-[#7a7a7a] bg-white pr-1 pl-[3px]">
          <input id="file-name" defaultValue="CT_PrimaryAttributes_Elementalist.csv" className="min-w-0 flex-1 outline-none" />
          <button aria-label="文件名历史" className="text-[#555]"><ThinChevron /></button>
        </div>
        <div className="relative ml-[15px] w-[235px] shrink-0">
          <select aria-label="文件类型" className="h-[28px] w-full appearance-none border border-[#adadad] bg-[#e1e1e1] pl-[3px] text-black">
            <option>All Files (*.csv;*.json)</option>
          </select>
          <ThinChevron className="pointer-events-none absolute top-[9px] right-1 text-[#555]" />
        </div>
      </div>
      <div className="mt-2 flex justify-end gap-[17px] pr-6">
        <button className="h-[31px] w-[108px] border-2 border-[#0078d7] bg-[#e1e1e1]">打开(O)</button>
        <button className="h-[31px] w-[108px] border border-[#adadad] bg-[#e1e1e1]">取消</button>
      </div>
      <Svg w={12} h={12} className="absolute right-0.5 bottom-px">
        <path d="M8 0h3v3H8zM4 4h3v3H4zM8 4h3v3H8zM0 8h3v3H0zM4 8h3v3H4zM8 8h3v3H8z" fill="#bdbdbd" />
      </Svg>
    </div>
  );
}

function FileDialog() {
  return (
    <section
      role="dialog"
      aria-label="选择源文件"
      className="absolute top-[155px] right-[54px] left-[83px] bg-white font-['Noto_Sans','Noto_Sans_CJK_SC',sans-serif] text-[15px] leading-5 text-black shadow-[0_3px_16px_rgba(0,0,0,0.5)]"
    >
      <header className="flex h-11 items-start pt-2 pr-3 pl-2.5">
        <span className="flex h-5 items-center gap-1.5">
          <UnrealIcon />
          选择源文件索引 0 针对: CT_PrimaryAttributes_Elementalist
        </span>
        <button aria-label="关闭" className="mt-1 mr-[3px] ml-auto">
          <Svg w={12} h={12}>
            <path d="M0 0l12 12M12 0 0 12" stroke="#000" strokeWidth="1.200" />
          </Svg>
        </button>
      </header>
      <AddressBar />
      <CommandBar />
      <div className="flex">
        <Places />
        <FileTable />
      </div>
      <DialogFooter />
    </section>
  );
}

export default function App() {
  return (
    <div className="relative flex min-h-screen flex-col overflow-hidden bg-[#151515] font-['Roboto','Noto_Sans_CJK_SC',sans-serif]">
      <TabBar />
      <AssetToolbar />
      <CurveToolbar />
      <main className="flex flex-1">
        <CurveList />
        <div className="w-[7px] shrink-0" />
        <CurveGraph />
      </main>

      <FileDialog />

      {/* Highlight frames */}
      <div className="pointer-events-none absolute top-7 left-[186px] h-[65px] w-[155px] border-3 border-[#fb3a3a]" />
      <div className="pointer-events-none absolute top-[287px] left-[285px] h-[55px] w-[403px] border-3 border-[#fb3a3a]" />
      <div className="pointer-events-none absolute top-[780px] right-[183px] h-[105px] w-[179px] border-3 border-[#fb3a3a]" />

      <p className="absolute right-4 bottom-1.5 text-[20px] leading-7 text-[#b4b4b4] [text-shadow:1px_1px_1px_#000]">
        CSDN @暮志未晚season
      </p>
    </div>
  );
}
